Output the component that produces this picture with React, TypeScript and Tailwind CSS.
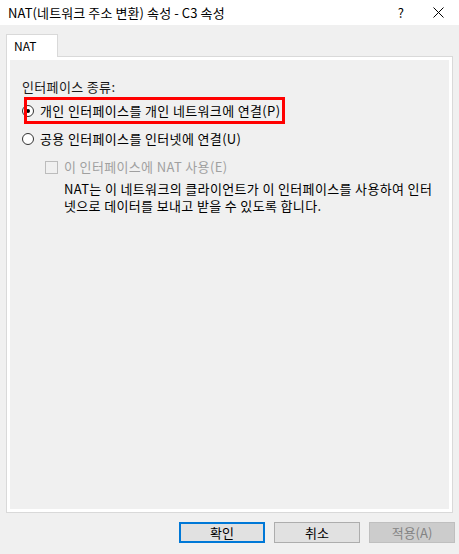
export default function App() {
  const font = { fontFamily: '"Noto Sans CJK KR", "Noto Sans", sans-serif' };
  return (
    <div
      className="relative flex h-[554px] w-[459px] flex-col bg-[#f0f0f0] text-[13px] text-black"
      style={font}
    >
      {/* title bar */}
      <div className="flex h-[25px] items-center bg-white pl-[8px]">
        <span className="leading-[16px] tracking-[0.1px]">NAT(네트워크 주소 변환) 속성 - C3 속성</span>
        <span className="ml-auto mr-[29px] text-[13px] leading-[16px]">?</span>
        <svg width="11" height="11" viewBox="0 0 11 11" className="mr-[15px]">
          <path d="M0.5 0.5 L10.5 10.5 M10.5 0.5 L0.5 10.5" stroke="#000" strokeWidth="1" />
        </svg>
      </div>

      {/* tabs + page */}
      <div className="flex flex-col px-[6px] pt-[9px]">
        <div className="flex">
          <div className="relative z-10 -mb-px flex h-[23px] w-[52px] items-center border border-b-0 border-[#d9d9d9] bg-white pl-[7px]">
            <span className="text-[12px] leading-[16px]">NAT</span>
          </div>
        </div>
        <div className="h-[457px] border border-[#d9d9d9] bg-white p-[3px]">
          <div className="h-full bg-[#f0f0f0] pl-[12px] pt-[19px] tracking-[0.35px]">
            <div className="leading-[16px] text-[#1a1a1a]">인터페이스 종류:</div>

            <div className="relative mt-[8px] flex h-[16px] items-center">
              <span className="flex h-[12px] w-[12px] items-center justify-center rounded-full border border-[#333] bg-white">
                <span className="h-[4px] w-[4px] rounded-full bg-black" />
              </span>
              <span className="ml-[6px] leading-[16px]">개인 인터페이스를 개인 네트워크에 연결(P)</span>
              <div className="absolute left-[2px] top-[-6px] h-[27px] w-[261px] border-[3px] border-[#ff0000]" />
            </div>

            <div className="mt-[12px] flex h-[16px] items-center">
              <span className="h-[12px] w-[12px] rounded-full border border-[#333] bg-white" />
              <span className="ml-[6px] leading-[16px]">공용 인터페이스를 인터넷에 연결(U)</span>
            </div>

            <div className="ml-[23px] mt-[12px] flex h-[16px] items-center">
              <span className="h-[13px] w-[13px] border border-[#bcbcbc] bg-[#f0f0f0]" />
              <span className="ml-[6px] leading-[16px] text-[#a0a0a0]">이 인터페이스에 NAT 사용(E)</span>
            </div>

            <div className="ml-[42px] mt-[5px] leading-[17px]">
              NAT는 이 네트워크의 클라이언트가 이 인터페이스를 사용하여 인터
              <br />
              넷으로 데이터를 보내고 받을 수 있도록 합니다.
            </div>
          </div>
        </div>
      </div>

      {/* buttons */}
      <div className="mt-[9px] flex justify-end gap-[9px] pr-[4px]">
        <button className="h-[21px] w-[86px] border-2 border-[#0078d7] bg-[#e1e1e1] leading-[16px]">
          확인
        </button>
        <button className="h-[21px] w-[86px] border border-[#adadad] bg-[#e1e1e1] leading-[16px]">
          취소
        </button>
        <button className="h-[21px] w-[86px] border border-[#bfbfbf] bg-[#cccccc] leading-[16px] text-[#838383]">
          적용(A)
        </button>
      </div>
    </div>
  );
}
